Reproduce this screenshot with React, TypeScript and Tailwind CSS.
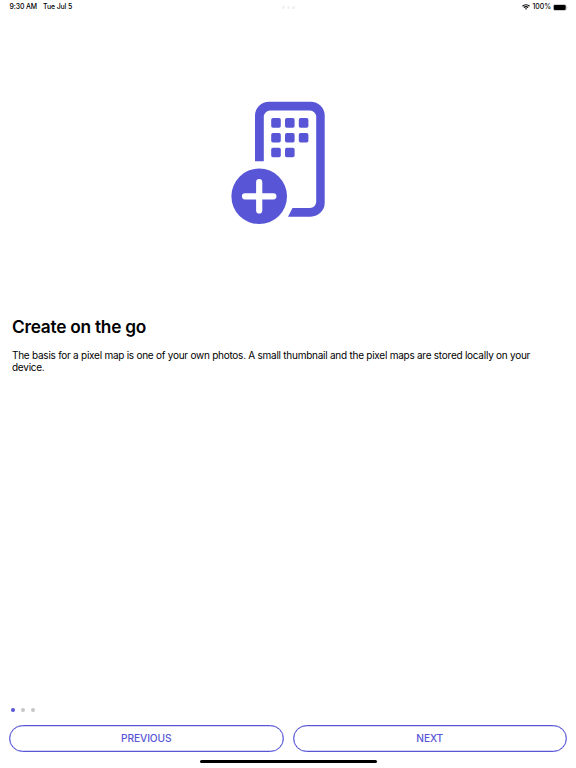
import React from "react";

const PIXELS = [
  [40.2, 17.1], [54, 17.1], [67.8, 17.1],
  [40.2, 31.9], [54, 31.9], [67.8, 31.9],
  [40.2, 46.7], [54, 46.7],
];

const PhonePlusIcon = () => (
  <svg className="h-[124px] w-[96px]" viewBox="0 0 96 124" fill="#5856d6">
    <path d="M24 60.3V14.7A14 14 0 0 1 38 .7H79.7A14 14 0 0 1 93.7 14.7V101.7A14 14 0 0 1 79.7 115.7H57L61.5 107H79A6.2 6.2 0 0 0 85.2 100.8V15.8A6.2 6.2 0 0 0 79 9.6H39A6.2 6.2 0 0 0 32.8 15.8V60.3Z" />
    {PIXELS.map(([x, y]) => (
      <rect key={`${x}-${y}`} x={x} y={y} width="9.6" height="9.6" rx="1.8" />
    ))}
    <circle cx="28.2" cy="95.3" r="27.8" />
    <path d="M28.2 81.2V109.4M14 95.3H42.4" stroke="#fff" strokeWidth="6.2" strokeLinecap="round" />
  </svg>
);

const WifiIcon = () => (
  <svg className="h-[6px] w-[8px]" viewBox="0 0 16 12" fill="none" stroke="#000" strokeWidth="2.4">
    <path d="M1 4.4A10 10 0 0 1 15 4.4M3.8 7.3A6 6 0 0 1 12.2 7.3" />
    <path d="M8 11.6L5.8 9.4A3.1 3.1 0 0 1 10.2 9.4Z" fill="#000" stroke="none" />
  </svg>
);

const BatteryIcon = () => (
  <svg className="h-[7px] w-[15px]" viewBox="0 0 15 7">
    <rect x="0.25" y="0.45" width="13" height="6.1" rx="1.7" fill="none" stroke="#999" strokeWidth="0.5" />
    <rect x="0.8" y="1" width="11.9" height="5" rx="1.2" />
    <path d="M14 2.5Q14.8 3.5 14 4.5Z" fill="#999" />
  </svg>
);

const StatusBar = () => (
  <header className="grid h-[14px] grid-cols-3 items-center pt-px pr-[8px] pl-[9.5px] text-[6.9px] font-medium">
    <div className="flex gap-[6px] whitespace-nowrap tracking-[-0.1px]">
      <span>9:30 AM</span>
      <span>Tue Jul 5</span>
    </div>
    <div className="flex justify-center gap-[2px]">
      {[0, 1, 2].map((dot) => (
        <span key={dot} className="size-[3px] rounded-full bg-[#f0f0f0]" />
      ))}
    </div>
    <div className="flex items-center justify-end gap-[2px]">
      <WifiIcon />
      <span>100%</span>
      <BatteryIcon />
    </div>
  </header>
);

interface PillButtonProps {
  label: string;
}

const PillButton: React.FC<PillButtonProps> = ({ label }) => (
  <button className="h-[27px] flex-1 rounded-full border border-[#5856d6] text-[10.2px] font-medium tracking-[-0.1px] text-[#5856d6] shadow-[inset_0_0_0_0.3px_#5856d6]">
    {label}
  </button>
);

export default function App() {
  return (
    <div className="flex h-screen flex-col overflow-hidden bg-white font-['Inter','Liberation_Sans',sans-serif] text-black">
      <StatusBar />

      <main className="flex flex-1 flex-col px-[12px]">
        <div className="mt-[87px] ml-[219px]">
          <PhonePlusIcon />
        </div>
        <h1 className="mt-[90px] text-[17.3px] leading-[24px] font-semibold tracking-[-0.25px]">
          Create on the go
        </h1>
        <p className="mt-[10px] text-[10px] leading-[12px] tracking-[-0.25px]">
          The basis for a pixel map is one of your own photos. A small thumbnail and the pixel maps are stored locally on your device.
        </p>
      </main>

      <footer className="flex flex-col">
        <div className="flex gap-[6px] px-[11px]">
          <span className="size-[4px] rounded-full bg-[#5856d6]" />
          <span className="size-[4px] rounded-full bg-[#c7c7cc]" />
          <span className="size-[4px] rounded-full bg-[#c7c7cc]" />
        </div>
        <div className="mt-[13px] flex gap-[9px] px-[9px]">
          <PillButton label="PREVIOUS" />
          <PillButton label="NEXT" />
        </div>
        <div className="mx-auto mt-[8px] mb-[5px] h-[3px] w-[177px] rounded-full bg-black" />
      </footer>
    </div>
  );
}
